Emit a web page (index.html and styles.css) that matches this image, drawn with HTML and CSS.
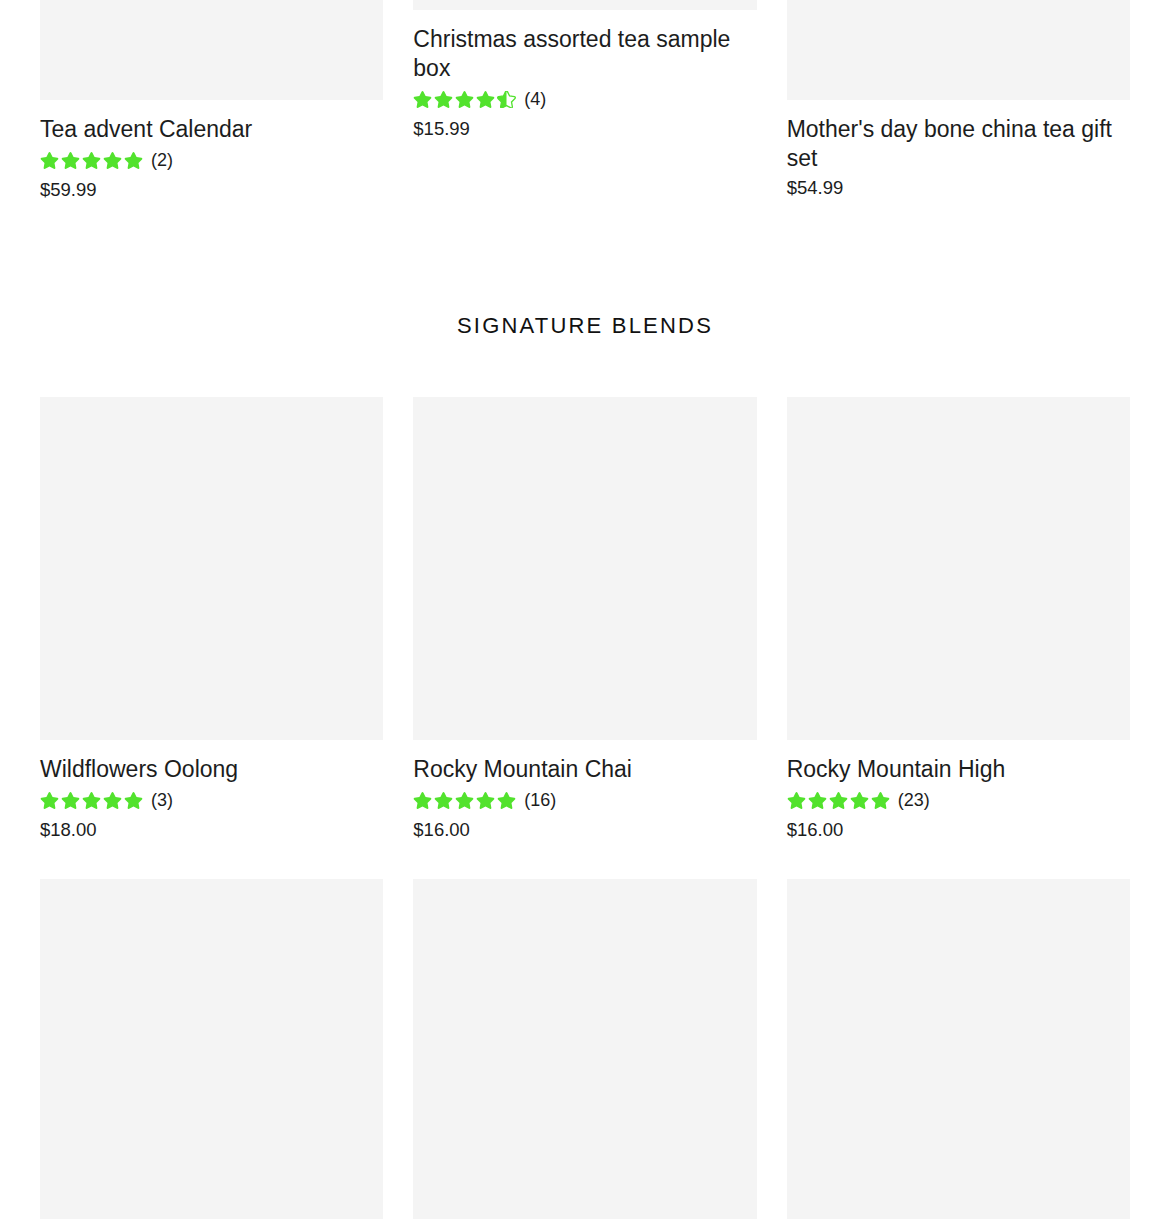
FILE: index.html
```html
<!DOCTYPE html>
<html lang="en">
<head>
  <meta charset="UTF-8">
  <meta name="viewport" content="width=device-width, initial-scale=1.0">
  <title>Tea Shop - Collections</title>
  <link rel="stylesheet" href="styles.css">
</head>
<body>
  <svg class="sprite" aria-hidden="true">
    <defs>
      <symbol id="star" viewBox="0 0 576 512">
        <path d="M259.3 17.8L194 150.2 47.9 171.5c-26.2 3.8-36.7 36.1-17.7 54.6l105.7 103-25 145.5c-4.5 26.3 23.2 46 46.4 33.7L288 439.6l130.7 68.7c23.2 12.2 50.9-7.4 46.4-33.7l-25-145.5 105.7-103c19-18.5 8.5-50.8-17.7-54.6L382 150.2 316.7 17.8c-11.7-23.6-45.6-23.9-57.4 0z"/>
      </symbol>
      <clipPath id="half">
        <rect x="0" y="0" width="9.5" height="17"/>
      </clipPath>
    </defs>
  </svg>

  <main class="page">
    <section class="collection collection--first">
      <div class="product-grid">
        <a class="product" href="#">
          <div class="thumb thumb--cut-lg"></div>
          <h3 class="product-title">Tea advent Calendar</h3>
          <div class="rating">
            <span class="stars">
              <svg class="star"><use href="#star"/></svg>
              <svg class="star"><use href="#star"/></svg>
              <svg class="star"><use href="#star"/></svg>
              <svg class="star"><use href="#star"/></svg>
              <svg class="star"><use href="#star"/></svg>
            </span>
            <span class="rating-count">(2)</span>
          </div>
          <div class="price">$59.99</div>
        </a>
        <a class="product" href="#">
          <div class="thumb thumb--cut-sm"></div>
          <h3 class="product-title">Christmas assorted tea sample box</h3>
          <div class="rating">
            <span class="stars">
              <svg class="star"><use href="#star"/></svg>
              <svg class="star"><use href="#star"/></svg>
              <svg class="star"><use href="#star"/></svg>
              <svg class="star"><use href="#star"/></svg>
              <svg class="star star--half">
                <use href="#star" class="star-outline"/>
                <use href="#star" clip-path="url(#half)"/>
              </svg>
            </span>
            <span class="rating-count">(4)</span>
          </div>
          <div class="price">$15.99</div>
        </a>
        <a class="product" href="#">
          <div class="thumb thumb--cut-lg"></div>
          <h3 class="product-title">Mother's day bone china tea gift set</h3>
          <div class="price">$54.99</div>
        </a>
      </div>
    </section>

    <section class="collection">
      <h2 class="section-title">Signature Blends</h2>
      <div class="product-grid">
        <a class="product" href="#">
          <div class="thumb"></div>
          <h3 class="product-title">Wildflowers Oolong</h3>
          <div class="rating">
            <span class="stars">
              <svg class="star"><use href="#star"/></svg>
              <svg class="star"><use href="#star"/></svg>
              <svg class="star"><use href="#star"/></svg>
              <svg class="star"><use href="#star"/></svg>
              <svg class="star"><use href="#star"/></svg>
            </span>
            <span class="rating-count">(3)</span>
          </div>
          <div class="price">$18.00</div>
        </a>
        <a class="product" href="#">
          <div class="thumb"></div>
          <h3 class="product-title">Rocky Mountain Chai</h3>
          <div class="rating">
            <span class="stars">
              <svg class="star"><use href="#star"/></svg>
              <svg class="star"><use href="#star"/></svg>
              <svg class="star"><use href="#star"/></svg>
              <svg class="star"><use href="#star"/></svg>
              <svg class="star"><use href="#star"/></svg>
            </span>
            <span class="rating-count">(16)</span>
          </div>
          <div class="price">$16.00</div>
        </a>
        <a class="product" href="#">
          <div class="thumb"></div>
          <h3 class="product-title">Rocky Mountain High</h3>
          <div class="rating">
            <span class="stars">
              <svg class="star"><use href="#star"/></svg>
              <svg class="star"><use href="#star"/></svg>
              <svg class="star"><use href="#star"/></svg>
              <svg class="star"><use href="#star"/></svg>
              <svg class="star"><use href="#star"/></svg>
            </span>
            <span class="rating-count">(23)</span>
          </div>
          <div class="price">$16.00</div>
        </a>
        <a class="product" href="#"><div class="thumb"></div></a>
        <a class="product" href="#"><div class="thumb"></div></a>
        <a class="product" href="#"><div class="thumb"></div></a>
      </div>
    </section>
  </main>
</body>
</html>
```

FILE: styles.css
```css
* { margin: 0; padding: 0; box-sizing: border-box; }
html, body { height: 100%; overflow: hidden; }
body {
  font-family: 'Liberation Sans', Arial, sans-serif;
  color: #1c1d1d;
  background: #fff;
}
.sprite { position: absolute; width: 0; height: 0; overflow: hidden; }
.page {
  padding: 0 40px;
}
.collection--first {
  padding-bottom: 107px;
}
.section-title {
  font-size: 22px;
  font-weight: normal;
  line-height: 30px;
  letter-spacing: 2.2px;
  text-transform: uppercase;
  text-align: center;
  color: #111;
  margin-bottom: 56px;
}
.product-grid {
  display: grid;
  grid-template-columns: repeat(3, 1fr);
  column-gap: 30px;
  row-gap: 35px;
}
.product {
  display: block;
  color: inherit;
  text-decoration: none;
}
.thumb {
  background: #f4f4f4;
  aspect-ratio: 1 / 1;
}
.thumb--cut-lg { aspect-ratio: auto; height: 100px; }
.thumb--cut-sm { aspect-ratio: auto; height: 10px; }
.product-title {
  font-size: 23px;
  font-weight: normal;
  line-height: 29px;
  margin-top: 15px;
}
.rating {
  display: flex;
  align-items: center;
  height: 29px;
  margin-top: 2px;
}
.stars {
  display: flex;
  gap: 2px;
  margin-right: 8px;
}
.star {
  width: 19px;
  height: 17px;
  fill: #52e22d;
  overflow: visible;
}
.star--half .star-outline {
  fill: #fff;
  stroke: #52e22d;
  stroke-width: 40;
}
.rating-count {
  font-size: 18px;
}
.price {
  font-size: 18.5px;
  line-height: 29px;
}
```
